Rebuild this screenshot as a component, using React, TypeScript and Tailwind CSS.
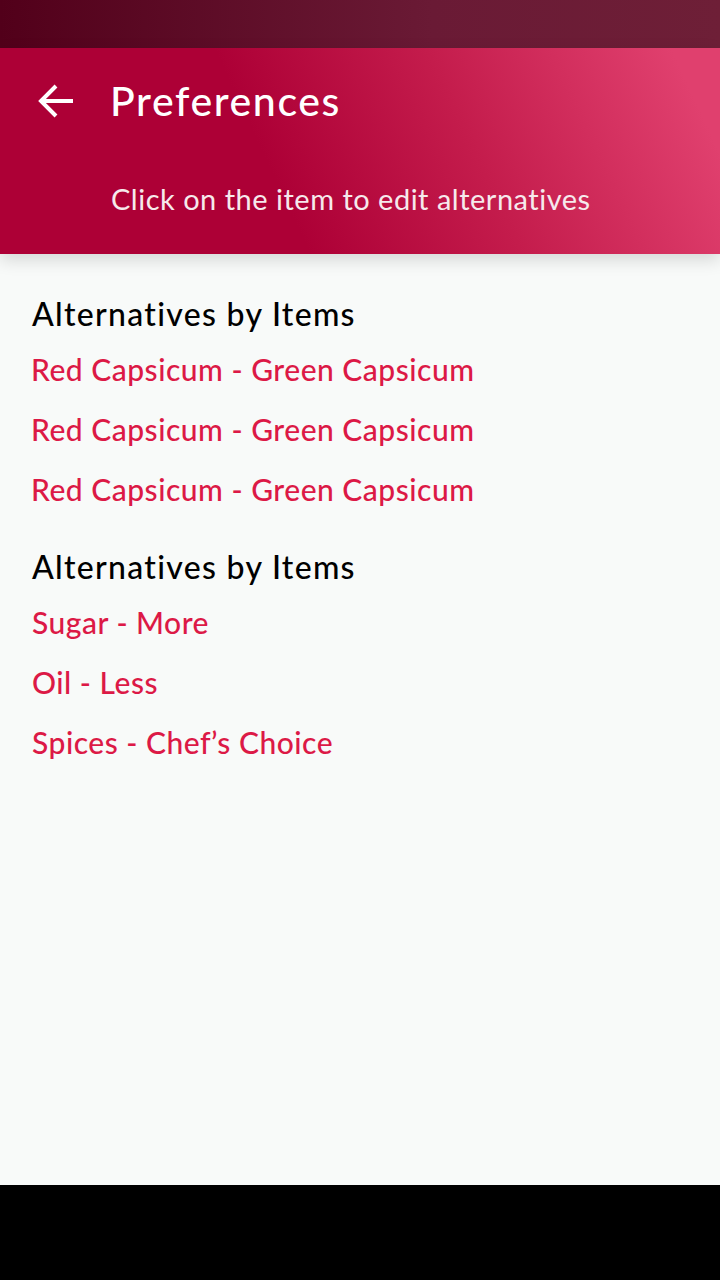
import { JSX } from "react";

const itemGroups: { title: string; items: string[] }[] = [
  {
    title: "Alternatives by Items",
    items: [
      "Red Capsicum - Green Capsicum",
      "Red Capsicum - Green Capsicum",
      "Red Capsicum - Green Capsicum",
    ],
  },
  {
    title: "Alternatives by Items",
    items: ["Sugar - More", "Oil - Less", "Spices - Chef’s Choice"],
  },
];

function BackArrow(): JSX.Element {
  return (
    <svg width="40" height="36" viewBox="0 0 40 36" fill="none">
      <path d="M4 18H37" stroke="white" strokeWidth="4" />
      <path d="M20 3L5 18L20 33" stroke="white" strokeWidth="4" />
    </svg>
  );
}

export default function App(): JSX.Element {
  return (
    <div
      className="flex flex-col w-[720px] h-[1280px] bg-[#f8faf9] overflow-hidden"
      style={{ fontFamily: "Lato, 'Liberation Sans', sans-serif" }}
    >
      {/* status bar */}
      <div className="h-[48px] shrink-0 bg-[linear-gradient(90deg,#52001a,#6a1a35_60%,#6e1f37)]" />

      {/* header */}
      <div className="relative z-10 h-[206px] shrink-0 bg-[linear-gradient(65deg,#ad0036_38%,#c41c4c_64%,#e0406e_94%)] shadow-[0_6px_16px_rgba(0,0,0,0.14)]">
        <div className="flex items-center h-[104px]">
          <div className="ml-[36px] mt-[2px]">
            <BackArrow />
          </div>
          <h1 className="ml-[34px] text-[41px] font-medium tracking-[1.6px] text-white leading-none">
            Preferences
          </h1>
        </div>
        <p className="ml-[111px] mt-[32px] text-[29px] font-normal tracking-[0.5px] text-[#f6e9ec] leading-none">
          Click on the item to edit alternatives
        </p>
      </div>

      {/* content */}
      <main className="flex-1 pt-[40px] pl-[31px]">
        {itemGroups.map((group, gi) => (
          <section key={gi} className={gi > 0 ? "mt-[28px]" : ""}>
            <h2 className="pl-[1px] text-[32px] font-medium tracking-[1.3px] text-black leading-[40px]">
              {group.title}
            </h2>
            <ul className="mt-[5px]">
              {group.items.map((item, ii) => (
                <li
                  key={ii}
                  className={`text-[30px] font-medium tracking-[0.5px] text-[#dc1946] leading-[60px] ${
                    gi > 0 ? "pl-[1px]" : ""
                  }`}
                >
                  {item}
                </li>
              ))}
            </ul>
          </section>
        ))}
      </main>

      {/* nav bar */}
      <div className="h-[95px] shrink-0 bg-black" />
    </div>
  );
}
